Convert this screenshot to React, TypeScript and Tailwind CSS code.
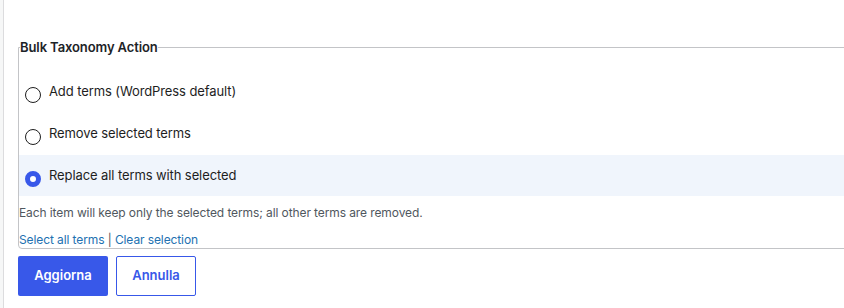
const options = [
  { id: 'add', label: 'Add terms (WordPress default)' },
  { id: 'remove', label: 'Remove selected terms' },
  { id: 'replace', label: 'Replace all terms with selected' },
]

function Radio({ checked }: { checked: boolean }) {
  return checked ? (
    <span className="mt-[6px] h-4 w-4 shrink-0 rounded-full border-[5px] border-[#3858e9] bg-white" />
  ) : (
    <span className="mt-[6px] h-4 w-4 shrink-0 rounded-full border border-[#1e1e1e] bg-white" />
  )
}

export default function App() {
  const selected = 'replace'

  return (
    <div className="flex h-[308px] w-[844px] overflow-hidden bg-white font-['Inter',sans-serif] text-[#1e1e1e]">
      <div className="w-[3px] shrink-0 bg-[#f6f7f7]" />
      <div className="w-px shrink-0 bg-[#dcdcde]" />
      <div className="min-w-0 flex-1 pl-[14px] pt-[37px]">
        <fieldset className="m-0 w-[850px] rounded-b-[4px] border border-[#c3c4c7] p-0">
          <legend className="ml-px px-0 text-[13px] font-semibold leading-5 tracking-[-0.1px] text-[#1d2327]">
            Bulk Taxonomy Action
          </legend>
          <div className="pt-[14px]">
            {options.map((o) => (
              <label
                key={o.id}
                className={`mb-px flex h-[41px] items-start gap-2 pl-[6px] pt-[10px] ${
                  o.id === selected ? 'bg-[#f0f5fc]' : ''
                }`}
              >
                <Radio checked={o.id === selected} />
                <span className="text-[13px] leading-5 tracking-[-0.1px]">{o.label}</span>
              </label>
            ))}
          </div>
          <p className="mt-[9px] text-[12px] leading-4 tracking-[-0.1px] text-[#50575e]">
            Each item will keep only the selected terms; all other terms are removed.
          </p>
          <p className="mt-[11px] text-[12px] leading-4 tracking-[-0.1px] text-[#50575e]">
            <a className="text-[#2271b1]">Select all terms</a> |{' '}
            <a className="text-[#2271b1]">Clear selection</a>
          </p>
        </fieldset>
        <div className="mt-[7px] flex gap-2">
          <button className="h-10 w-[90px] rounded-[2px] bg-[#3858e9] text-[13px] font-semibold text-white">
            Aggiorna
          </button>
          <button className="h-10 w-20 rounded-[2px] border border-[#3858e9] bg-white text-[13px] font-semibold text-[#3858e9]">
            Annulla
          </button>
        </div>
      </div>
    </div>
  )
}
